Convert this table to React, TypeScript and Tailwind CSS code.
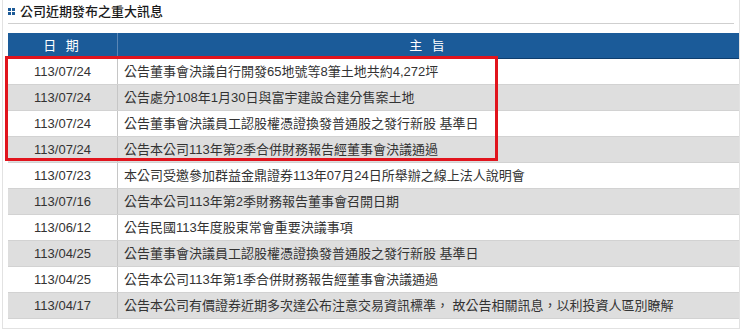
const rows: { date: string; title: string }[] = [
  { date: "113/07/24", title: "公告董事會決議自行開發65地號等8筆土地共約4,272坪" },
  { date: "113/07/24", title: "公告處分108年1月30日與富宇建設合建分售案土地" },
  { date: "113/07/24", title: "公告董事會決議員工認股權憑證換發普通股之發行新股 基準日" },
  { date: "113/07/24", title: "公告本公司113年第2季合併財務報告經董事會決議通過" },
  { date: "113/07/23", title: "本公司受邀參加群益金鼎證券113年07月24日所舉辦之線上法人說明會" },
  { date: "113/07/16", title: "公告本公司113年第2季財務報告董事會召開日期" },
  { date: "113/06/12", title: "公告民國113年度股東常會重要決議事項" },
  { date: "113/04/25", title: "公告董事會決議員工認股權憑證換發普通股之發行新股 基準日" },
  { date: "113/04/25", title: "公告本公司113年第1季合併財務報告經董事會決議通過" },
  { date: "113/04/17", title: "公告本公司有價證券近期多次達公布注意交易資訊標準， 故公告相關訊息，以利投資人區別瞭解" },
];

function App() {
  return (
    <div
      className="w-[740px] h-[330px] bg-white overflow-hidden text-[#333]"
      style={{ fontFamily: '"Liberation Sans", Arial, "Noto Sans CJK TC", sans-serif' }}
    >
      {/* Panel */}
      <div className="ml-[2px] h-[329px] border-l border-r border-b border-[#e2e2e2] relative">
        {/* Title */}
        <div className="h-[24px] mx-[5px] flex items-center gap-[5px] border-b border-[#cfcfcf]">
          <div className="grid grid-cols-2 gap-[1px] w-[7px] ml-0">
            <span className="w-[3px] h-[3px] bg-[#1d5b98]" />
            <span className="w-[3px] h-[3px] bg-[#1d5b98]" />
            <span className="w-[3px] h-[3px] bg-[#1d5b98]" />
            <span className="w-[3px] h-[3px] bg-[#1d5b98]" />
          </div>
          <h2 className="text-[13px] leading-none text-[#1a1a1a] font-medium">公司近期發布之重大訊息</h2>
        </div>

        {/* Table */}
        <div className="mt-[9px] ml-[5px] relative">
          <div className="flex h-[26px] bg-[#1b5b99] border-b border-[#0f3e6e] text-white text-[13px]">
            <div className="w-[110px] border-r border-[#5a86b5] flex items-center justify-center tracking-[3px]">日 期</div>
            <div className="flex-1 flex items-center justify-center tracking-[3px]">主 旨</div>
          </div>
          {rows.map((r, i) => (
            <div
              key={i}
              className={`flex h-[26px] border-b border-[#d2d2d2] text-[13px] ${i % 2 === 1 ? "bg-[#dedede]" : "bg-white"}`}
            >
              <div className="w-[110px] border-r border-[#c6c6c6] flex items-center justify-center">{r.date}</div>
              <div className="flex-1 flex items-center pl-[6px] whitespace-nowrap">{r.title}</div>
            </div>
          ))}
          {/* Highlight box */}
          <div className="absolute left-[-3px] top-[23px] w-[493px] h-[105px] border-[3px] border-[#e1141d] pointer-events-none" />
        </div>
      </div>
    </div>
  );
}

export default App;
